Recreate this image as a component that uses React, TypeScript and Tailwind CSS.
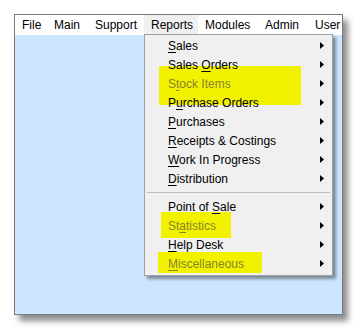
import React from "react";

interface MenuItem {
  label: string;
  ul: number;
  disabled?: boolean;
}

const topMenu = [
  { label: "File", width: 32 },
  { label: "Main", width: 41 },
  { label: "Support", width: 56 },
  { label: "Reports", width: 54, active: true },
  { label: "Modules", width: 60 },
  { label: "Admin", width: 50 },
  { label: "User", width: 60 },
];

const groupA: MenuItem[] = [
  { label: "Sales", ul: 0 },
  { label: "Sales Orders", ul: 6 },
  { label: "Stock Items", ul: 1, disabled: true },
  { label: "Purchase Orders", ul: 1 },
  { label: "Purchases", ul: 0 },
  { label: "Receipts & Costings", ul: 0 },
  { label: "Work In Progress", ul: 0 },
  { label: "Distribution", ul: 0 },
];

const groupB: MenuItem[] = [
  { label: "Point of Sale", ul: 9 },
  { label: "Statistics", ul: 2, disabled: true },
  { label: "Help Desk", ul: 0 },
  { label: "Miscellaneous", ul: 0, disabled: true },
];

const Arrow = () => (
  <svg width="4" height="7" viewBox="0 0 4 7" className="block">
    <path d="M0 0 L4 3.5 L0 7 Z" fill="#000" />
  </svg>
);

const Row = ({ label, ul, disabled }: MenuItem) => (
  <div
    className={`relative flex h-[19px] items-center pl-[23px] pr-[8px] ${
      disabled ? "text-[#85852c]" : "text-black"
    }`}
  >
    <span className="flex-1 whitespace-nowrap leading-none">
      {label.slice(0, ul)}
      <span className="underline underline-offset-2">{label[ul]}</span>
      {label.slice(ul + 1)}
    </span>
    <Arrow />
  </div>
);

export default function App() {
  return (
    <div
      className="h-[329px] w-[357px] bg-white pl-[14px] pt-[14px] text-[12px]"
      style={{ fontFamily: '"Liberation Sans", Arial, sans-serif' }}
    >
      <div className="relative h-[301px] w-[329px] overflow-hidden border border-[#7a7a7a] bg-[#cbe6fd] shadow-[5px_6px_6px_rgba(0,0,0,0.45)]">
        <div className="flex h-[20px] bg-white">
          {topMenu.map(({ label, width, active }) => (
            <div
              key={label}
              className={`flex h-[19px] shrink-0 items-center whitespace-nowrap pl-[7px] ${
                active ? "bg-[#f0f0f0]" : ""
              }`}
              style={{ width }}
            >
              {label}
            </div>
          ))}
        </div>

        <div className="absolute left-[129px] top-[19px] w-[189px] border border-[#a0a0a0] bg-[#f0f0f0] pb-[2px] pt-[1px] shadow-[3px_3px_3px_rgba(0,0,0,0.4)]">
          <div className="absolute left-[14px] top-[31px] h-[39px] w-[142px] bg-[#f2f200]" />
          <div className="absolute left-[16px] top-[177px] h-[26px] w-[70px] bg-[#f2f200]" />
          <div className="absolute left-[13px] top-[217px] h-[21px] w-[104px] bg-[#f2f200]" />

          {groupA.map((item, i) => (
            <Row key={i} {...item} />
          ))}
          <div className="flex h-[9px] items-center px-[2px]">
            <div className="h-px w-full bg-[#bdbdbd]" />
          </div>
          {groupB.map((item, i) => (
            <Row key={i} {...item} />
          ))}
        </div>
      </div>
    </div>
  );
}
